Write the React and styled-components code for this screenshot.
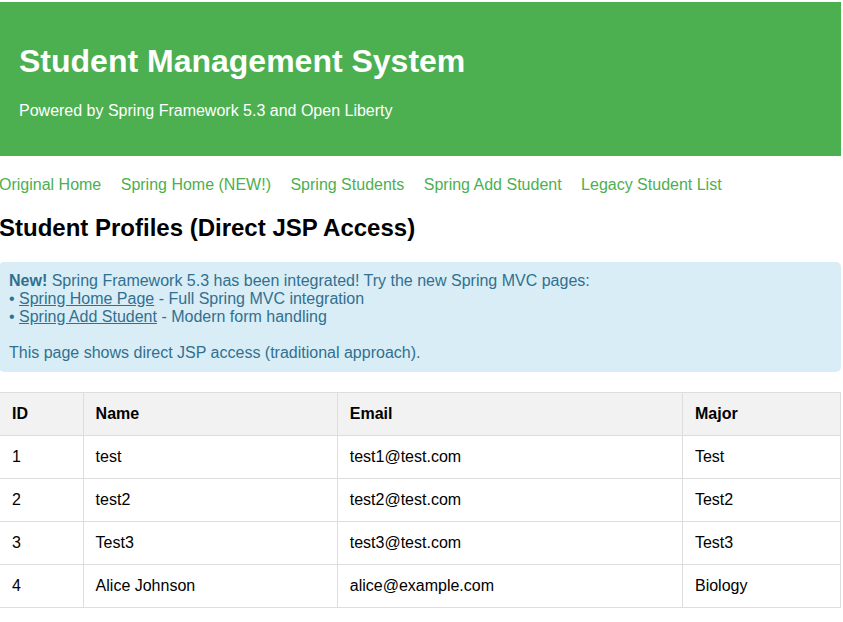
import React from 'react';
import styled, { createGlobalStyle } from 'styled-components';

const GlobalStyle = createGlobalStyle`
  body {
    margin: 0;
    background: #fff;
    color: #000;
    font-family: "Liberation Sans", Arial, sans-serif;
    font-size: 16px;
    line-height: 18px;
  }
`;

const Page = styled.div`
  margin-left: -1px;
  padding: 2px 2px 0 0;
`;

const Header = styled.header`
  padding: 40px 20px 36px;
  background: #4caf50;
  color: #fff;
`;

const Title = styled.h1`
  margin: 0 0 22px;
  font-size: 32px;
  line-height: 38px;
`;

const Tagline = styled.p`
  margin: 0;
`;

const Nav = styled.nav`
  margin: 20px 0;
`;

const NavLink = styled.a`
  margin-right: 15px;
  color: #4caf50;
  text-decoration: none;
`;

const Heading = styled.h2`
  margin: 0 0 20px;
  font-size: 24px;
  line-height: 28px;
`;

const Notice = styled.section`
  margin-bottom: 20px;
  padding: 10px;
  border-radius: 5px;
  background: #d9edf7;
  color: #31708f;
`;

const NoticeLink = styled.a`
  color: inherit;
`;

const Table = styled.table`
  width: 100%;
  border-collapse: collapse;
`;

const HeadCell = styled.th`
  padding: 12px;
  border: 1px solid #ddd;
  background: #f2f2f2;
  text-align: left;
`;

const Cell = styled.td`
  padding: 12px;
  border: 1px solid #ddd;
`;

const links = ['Original Home', 'Spring Home (NEW!)', 'Spring Students', 'Spring Add Student', 'Legacy Student List'];

const columns = ['ID', 'Name', 'Email', 'Major'];

const students = [
  { id: 1, name: 'test', email: 'test1@test.com', major: 'Test' },
  { id: 2, name: 'test2', email: 'test2@test.com', major: 'Test2' },
  { id: 3, name: 'Test3', email: 'test3@test.com', major: 'Test3' },
  { id: 4, name: 'Alice Johnson', email: 'alice@example.com', major: 'Biology' },
];

export default function App() {
  return (
    <Page>
      <GlobalStyle />
      <Header>
        <Title>Student Management System</Title>
        <Tagline>Powered by Spring Framework 5.3 and Open Liberty</Tagline>
      </Header>
      <Nav>
        {links.map((label) => (
          <React.Fragment key={label}>
            <NavLink href="#">{label}</NavLink>{' '}
          </React.Fragment>
        ))}
      </Nav>
      <main>
        <Heading>Student Profiles (Direct JSP Access)</Heading>
        <Notice>
          <strong>New!</strong> Spring Framework 5.3 has been integrated! Try the new Spring MVC pages:
          <br />
          • <NoticeLink href="#">Spring Home Page</NoticeLink> - Full Spring MVC integration
          <br />
          • <NoticeLink href="#">Spring Add Student</NoticeLink> - Modern form handling
          <br />
          <br />
          This page shows direct JSP access (traditional approach).
        </Notice>
        <Table>
          <thead>
            <tr>
              {columns.map((column) => (
                <HeadCell key={column} scope="col">{column}</HeadCell>
              ))}
            </tr>
          </thead>
          <tbody>
            {students.map((student) => (
              <tr key={student.id}>
                <Cell>{student.id}</Cell>
                <Cell>{student.name}</Cell>
                <Cell>{student.email}</Cell>
                <Cell>{student.major}</Cell>
              </tr>
            ))}
          </tbody>
        </Table>
      </main>
    </Page>
  );
}
